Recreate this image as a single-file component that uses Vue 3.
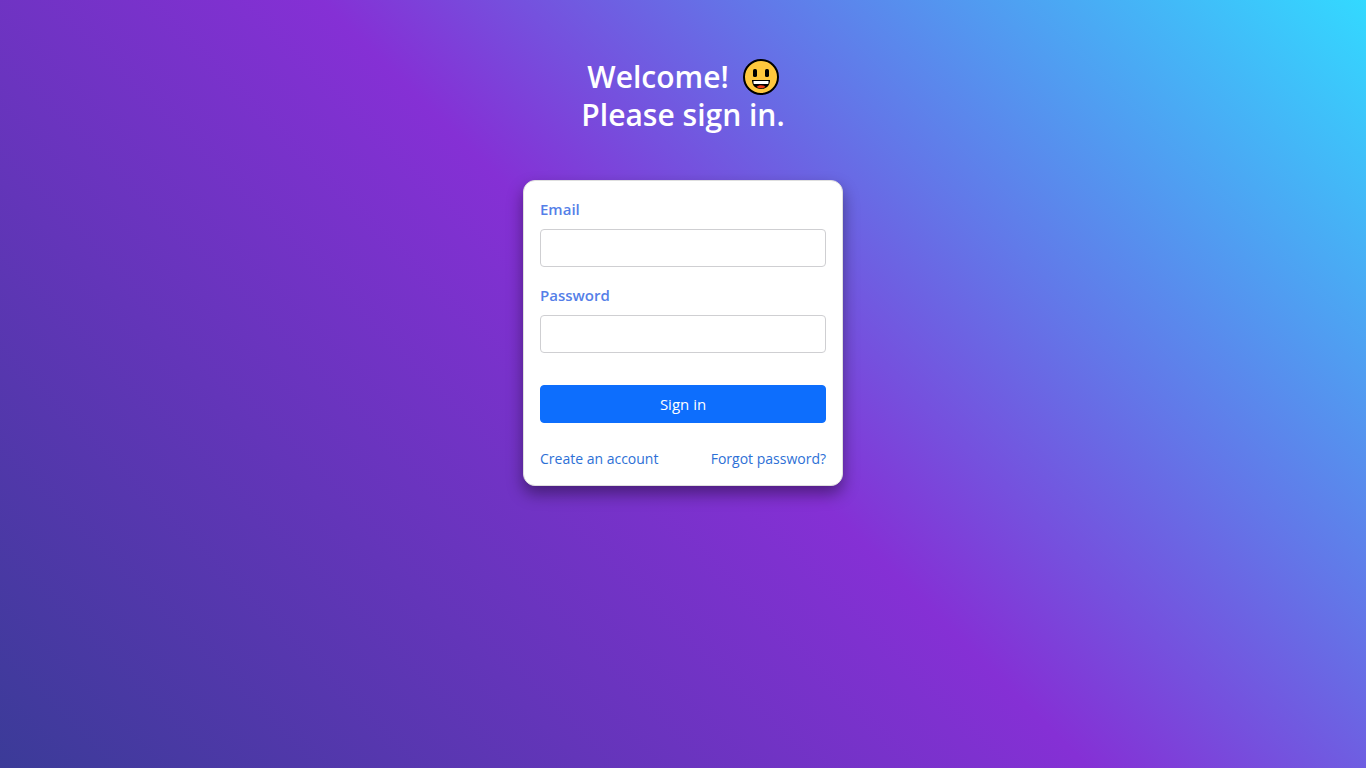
<script setup>
import { ref } from 'vue'

const email = ref('')
const password = ref('')
</script>

<template>
  <main class="page">
    <h1 class="title">
      <span class="line">
        Welcome!
        <svg class="face" viewBox="0 0 36 36" role="img" aria-label="Smiling face">
          <circle cx="18" cy="18" r="17" fill="#ffc83d" stroke="#000" stroke-width="2" />
          <rect x="10" y="10" width="4" height="8" rx="1.6" fill="#000" />
          <rect x="22" y="10" width="4" height="8" rx="1.6" fill="#000" />
          <path d="M9 21h18c0 5.500-3.500 9-9 9s-9-3.500-9-9z" fill="#000" />
          <path d="M10.500 22h15v2c0 .6-.4 1-1 1h-13c-.6 0-1-.4-1-1z" fill="#fff" />
          <path d="M13.500 28c1.200-1.300 2.700-1.800 4.500-1.800s3.300.5 4.500 1.800c-1.300.8-2.800 1.200-4.500 1.200s-3.200-.4-4.500-1.200z" fill="#f03a17" />
        </svg>
      </span>
      <span class="line">Please sign in.</span>
    </h1>

    <form class="card" @submit.prevent>
      <div class="field">
        <label for="email">Email</label>
        <input id="email" v-model="email" type="email" autocomplete="email" />
      </div>
      <div class="field">
        <label for="password">Password</label>
        <input id="password" v-model="password" type="password" autocomplete="current-password" />
      </div>
      <button type="submit">Sign in</button>
      <div class="links">
        <a href="#">Create an account</a>
        <a href="#">Forgot password?</a>
      </div>
    </form>
  </main>
</template>

<style>
body {
  margin: 0;
}
</style>

<style scoped>
.page {
  box-sizing: border-box;
  min-height: 100vh;
  padding: 58px 16px 48px;
  display: flex;
  flex-direction: column;
  align-items: center;
  gap: 46px;
  background: linear-gradient(45deg, #3b3b98 0%, #8530d5 51%, #617ae9 72%, #33d9ff 100%);
  font-family: "Segoe UI", "Open Sans", "Noto Sans", sans-serif;
  font-size: 15px;
  line-height: 24px;
}

.title {
  margin: 0;
  color: #fff;
  font-size: 30px;
  font-weight: 600;
  line-height: 38px;
  text-align: center;
}

.line {
  display: flex;
  justify-content: center;
  align-items: center;
  gap: 14px;
}

.face {
  width: 36px;
  height: 36px;
}

.card {
  box-sizing: border-box;
  width: 100%;
  max-width: 320px;
  padding: 16px;
  border: 1px solid #dfdfdf;
  border-radius: 12px;
  background: #fff;
  box-shadow: 0 8px 16px rgba(0, 0, 0, 0.4);
}

.field {
  margin-bottom: 16px;
}

label {
  display: block;
  margin-bottom: 8px;
  color: #557fe8;
  font-weight: 600;
}

input {
  display: block;
  box-sizing: border-box;
  width: 100%;
  height: 38px;
  padding: 6px 12px;
  border: 1px solid #cfcfd2;
  border-radius: 4px;
  background: #fff;
  color: #212529;
  font: inherit;
}

button {
  display: block;
  width: 100%;
  height: 38px;
  margin-top: 32px;
  padding: 6px 12px;
  border: 1px solid #0d6efd;
  border-radius: 4px;
  background: #0d6efd;
  color: #fff;
  font: inherit;
  cursor: pointer;
}

.links {
  display: flex;
  justify-content: space-between;
  margin-top: 26px;
  font-size: 14px;
  line-height: 20px;
}

.links a {
  color: #2d70d6;
  text-decoration: none;
}
</style>
